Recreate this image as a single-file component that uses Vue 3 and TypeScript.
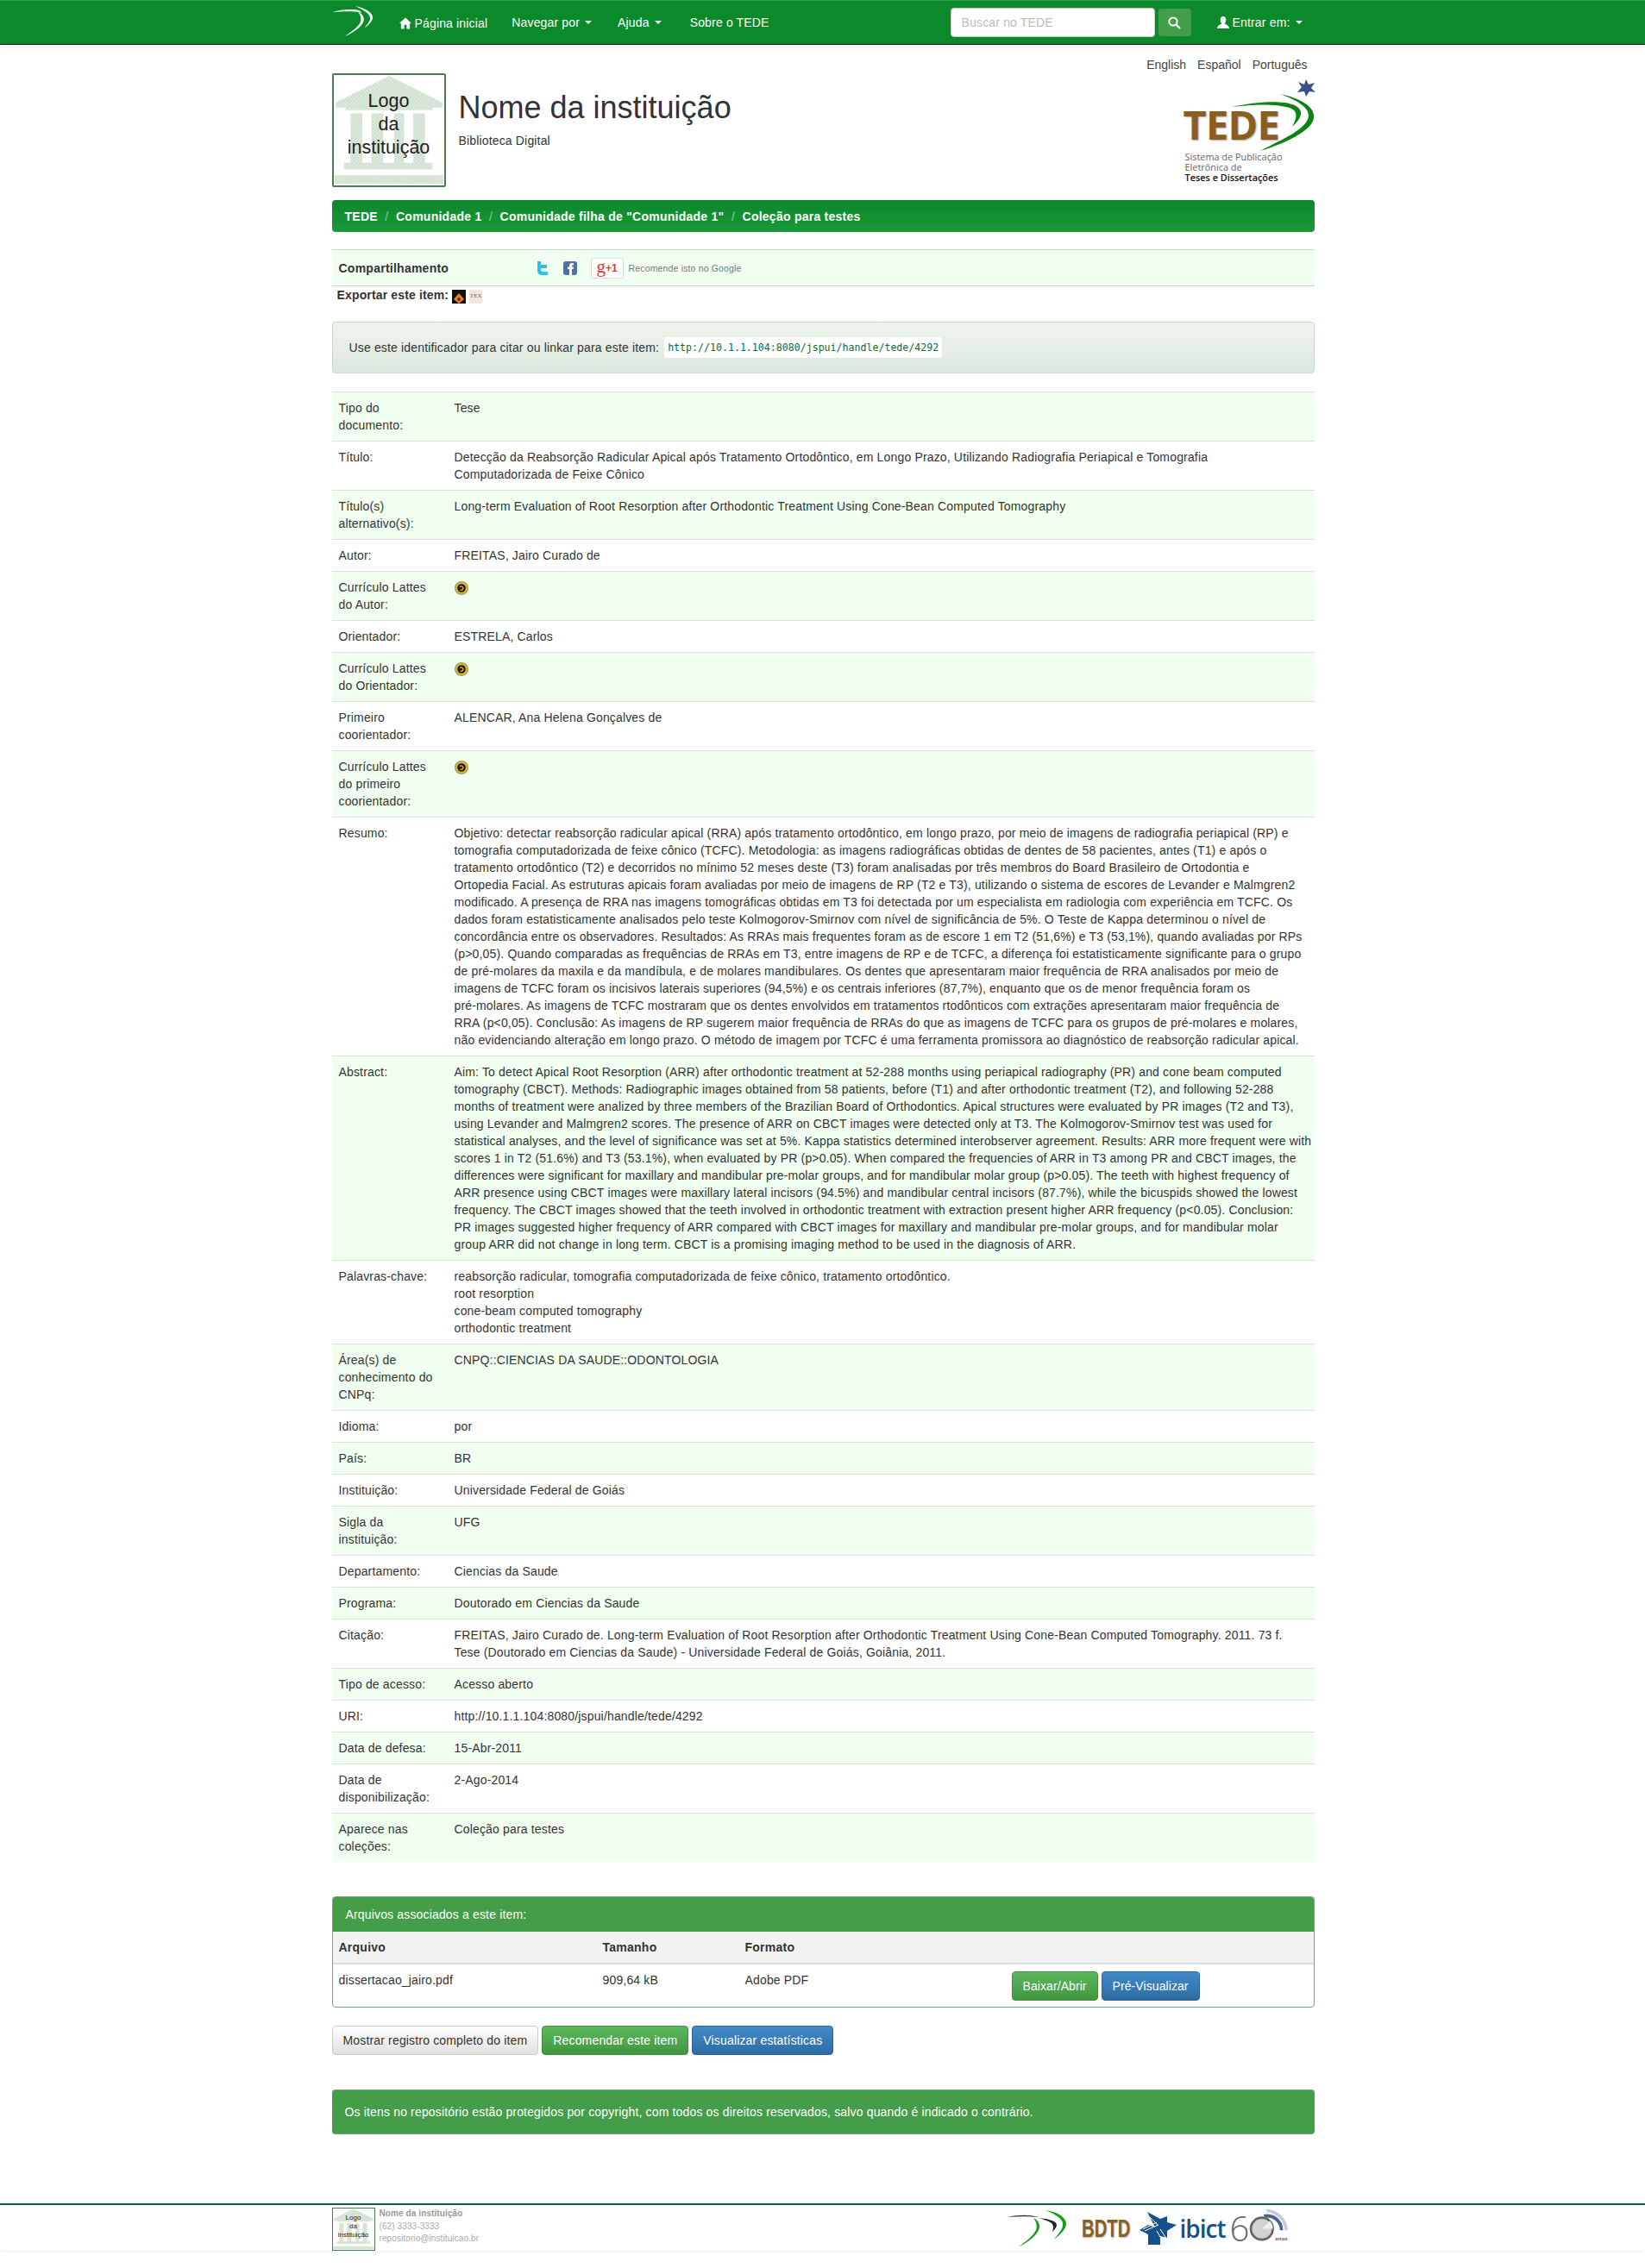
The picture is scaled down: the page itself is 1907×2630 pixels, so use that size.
<template>
  <div class="page">
    <nav class="navbar">
      <div class="container nav-inner">
        <a class="brand">
          <svg width="48" height="36" viewBox="0 0 48 36">
            <path d="M0 7C10 4 24 3 31 5C33 6 34 7 34 8C30 6 14 6 0 7Z" fill="#fff" />
            <path d="M27 0C38 2 48 8 47 14C46 19 41 23 37 26C40 22 45 17 44 13C43 8 35 4 27 0Z" fill="#fff" />
            <path d="M30 7C36 9 38 14 36 19C33 25 24 31 15 35C22 30 31 24 33 18C34 14 33 10 30 7Z" fill="#fff" />
          </svg>
        </a>
        <a class="nav-link home">
          <svg class="glyph" width="14" height="14" viewBox="0 0 15 14">
            <path d="M7.500 0L15 7H13V14H9V9H6V14H2V7H0Z" fill="#fff" />
          </svg>
          Página inicial
        </a>
        <a class="nav-link">Navegar por <span class="caret"></span></a>
        <a class="nav-link help">Ajuda <span class="caret"></span></a>
        <a class="nav-link">Sobre o TEDE</a>
        <div class="nav-search">
          <input class="search-input" type="text" placeholder="Buscar no TEDE" />
          <button class="search-btn" type="button">
            <svg width="15" height="15" viewBox="0 0 15 15">
              <circle cx="6" cy="6" r="4.600" fill="none" stroke="#fff" stroke-width="2" />
              <path d="M9.500 9.500L14 14" stroke="#fff" stroke-width="2.400" />
            </svg>
          </button>
        </div>
        <a class="nav-link login">
          <svg class="glyph" width="14" height="14" viewBox="0 0 14 14">
            <path d="M7 0C9.200 0 10.300 1.800 10.300 4C10.300 6 9.400 7.400 8.800 8.200C9.400 9.400 14 10 14 14H0C0 10 4.600 9.400 5.200 8.200C4.600 7.400 3.700 6 3.700 4C3.700 1.800 4.800 0 7 0Z" fill="#fff" />
          </svg>
          Entrar em: <span class="caret"></span>
        </a>
      </div>
    </nav>

    <main class="container">
      <div class="langs">
        <a>English</a>
        <a>Español</a>
        <a>Português</a>
      </div>

      <header class="head">
        <div class="inst-logo">
          <svg class="temple" viewBox="0 0 132 132" preserveAspectRatio="none">
            <defs>
              <pattern id="hatch" width="3" height="3" patternUnits="userSpaceOnUse" patternTransform="rotate(45)">
                <rect width="3" height="3" fill="#dce9dc" />
                <rect width="1" height="3" fill="#c9dcc9" />
              </pattern>
            </defs>
            <path d="M66 1L130 33V39H118V42H14V39H2V33Z M20 46H34V105H20Z M45 46H59V105H45Z M72 46H84V105H72Z M95 46H109V105H95Z M12 105H118V113H12Z M1 120H131V130H1Z" fill="url(#hatch)" />
          </svg>
          <span class="inst-logo-text">Logo<br />da<br />instituição</span>
        </div>
        <div class="head-title">
          <h1>Nome da instituição</h1>
          <p>Biblioteca Digital</p>
        </div>
        <div class="tede">
          <svg class="tede-art" width="152" height="122" viewBox="0 0 152 122">
            <path d="M141 0L144 6L151 4L147 10L152 15L145 14L141 20L139 14L131 15L136 9L132 3L139 6Z" fill="#3d4f8a" />
            <path d="M111 17C135 22 152 32 150 45C148 60 115 75 88 83C112 70 143 58 144 42C144 32 130 24 111 17Z" fill="#0c8412" />
            <path d="M55 32C80 26 112 24 125 29C137 33 140 42 125 55C131 44 132 37 122 33C105 28 80 29 55 32Z" fill="#0c8412" />
          </svg>
          <span class="tede-word">TEDE</span>
          <span class="tede-line l1">Sistema de Publicação</span>
          <span class="tede-line l2">Eletrônica de</span>
          <span class="tede-line l3">Teses e Dissertações</span>
        </div>
      </header>

      <ul class="crumbs">
        <li v-for="(c, i) in crumbs" :key="c">
          <span v-if="i > 0" class="sep">/</span>
          <a>{{ c }}</a>
        </li>
      </ul>

      <div class="share">
        <strong class="share-label">Compartilhamento</strong>
        <svg class="ic-tw" width="12" height="16" viewBox="0 0 12 16">
          <path d="M0 0H4V4H11V8H4V10C4 12 6 12.500 12 12V16H6C2 16 0 14 0 10Z" fill="#2fbdf5" />
        </svg>
        <svg class="ic-fb" width="16" height="16" viewBox="0 0 16 16">
          <rect width="16" height="16" rx="3" fill="#4f71a8" />
          <path d="M7 16V9H5V6.500H7V5C7 3 8.300 2 10 2H12V4.500H11C10.300 4.500 10 4.800 10 5.400V6.500H12L11.600 9H10V16Z" fill="#fff" />
        </svg>
        <span class="gplus"><span class="g">g</span><span class="plus">+1</span></span>
        <span class="gplus-text">Recomende isto no Google</span>
      </div>

      <div class="export">
        <strong>Exportar este item:</strong>
        <svg class="exp-ic" width="16" height="16" viewBox="0 0 16 16">
          <rect width="16" height="16" fill="#111" />
          <path d="M8 4L14 11L8 16L2 11Z" fill="#e8811c" />
          <rect x="6.500" y="9.500" width="3" height="3" fill="#5a1408" />
        </svg>
        <span class="tex">TEX</span>
      </div>

      <div class="cite-well">
        Use este identificador para citar ou linkar para este item:
        <code>http://10.1.1.104:8080/jspui/handle/tede/4292</code>
      </div>

      <table class="meta">
        <tbody>
          <tr v-for="row in rows" :key="row.label">
            <td class="meta-label">{{ row.label }}</td>
            <td class="meta-value">
              <svg v-if="row.lattes" class="lattes" width="16" height="16" viewBox="0 0 16 16">
                <circle cx="8" cy="8" r="8" fill="#a89c6a" />
                <circle cx="8" cy="8" r="6.500" fill="#e2c21e" />
                <circle cx="8" cy="8" r="4.800" fill="#1c1a10" />
                <path d="M6 6.500C8 5 10.500 6.500 9.800 8.800C9.300 10.300 7.500 10.600 6.500 10" fill="none" stroke="#e2c21e" stroke-width="1.300" />
              </svg>
              <template v-else>
                <div v-for="line in row.lines" :key="line" :class="{ 'fixed-line': row.fixed }">{{ line }}</div>
              </template>
            </td>
          </tr>
        </tbody>
      </table>

      <section class="files">
        <div class="files-head">Arquivos associados a este item:</div>
        <div class="files-row files-cols">
          <span class="c-name">Arquivo</span>
          <span class="c-size">Tamanho</span>
          <span class="c-type">Formato</span>
        </div>
        <div class="files-row files-item">
          <span class="c-name">dissertacao_jairo.pdf</span>
          <span class="c-size">909,64 kB</span>
          <span class="c-type">Adobe PDF</span>
          <span class="c-actions">
            <a class="btn btn-green">Baixar/Abrir</a>
            <a class="btn btn-blue">Pré-Visualizar</a>
          </span>
        </div>
      </section>

      <div class="actions">
        <a class="btn btn-white">Mostrar registro completo do item</a>
        <a class="btn btn-green">Recomendar este item</a>
        <a class="btn btn-blue">Visualizar estatísticas</a>
      </div>

      <div class="copyright">
        Os itens no repositório estão protegidos por copyright, com todos os direitos reservados, salvo quando é indicado o contrário.
      </div>
    </main>

    <footer class="footer">
      <div class="container footer-inner">
        <div class="foot-logo">
          <svg class="temple" viewBox="0 0 132 132" preserveAspectRatio="none">
            <path d="M66 1L130 33V39H118V42H14V39H2V33Z M20 46H34V105H20Z M45 46H59V105H45Z M72 46H84V105H72Z M95 46H109V105H95Z M12 105H118V113H12Z M1 120H131V130H1Z" fill="#d5e4d5" />
          </svg>
          <span class="foot-logo-text">Logo<br />da<br />instituição</span>
        </div>
        <div class="foot-info">
          <strong>Nome da instituição</strong>
          <span>(62) 3333-3333</span>
          <span>repositorio@instituicao.br</span>
        </div>
        <div class="foot-logos">
          <svg class="foot-swoosh" width="68" height="46" viewBox="0 0 68 46">
            <path d="M0 10C12 7 26 7 36 10C26 9 12 9 0 10Z" fill="#333" />
            <path d="M44 2C58 4 68 10 68 18C68 24 60 31 54 36C58 30 65 24 64 17C63 11 54 6 44 2Z" fill="#14a014" />
            <path d="M36 11C46 12 58 14 57 20C56 23 54 25 52 27C53 23 54 20 51 17C47 14 42 13 36 11Z" fill="#222" />
            <path d="M30 11C37 14 39 21 35 27C31 34 20 41 12 45C20 39 30 32 33 25C35 20 33 15 30 11Z" fill="#14a014" />
          </svg>
          <span class="bdtd"><span>BDTD</span></span>
          <svg class="ibict-star" width="43" height="38" viewBox="0 0 43 38">
            <path d="M9 0L24 8L32 5V12L43 15L32 22V30L24 28V38L10 38V26L0 21L10 15L18 18Z" fill="#14508c" />
            <path d="M4 20L20 12M6 22L22 15M20 22L28 36M24 20L32 32M12 6L22 16" stroke="#fff" stroke-width="1" />
          </svg>
          <span class="ibict">ibict</span>
          <span class="sixty">
            <span class="six">6</span>
            <svg class="zero" width="46" height="40" viewBox="0 0 50 44">
              <path d="M18 10A20 20 0 0 1 43 30L39 30A16 16 0 0 0 20 14Z" fill="#4d5f94" />
              <path d="M22 3A28 28 0 0 1 49 30L45 30A24 24 0 0 0 22 7Z" fill="#c3cadc" />
              <circle cx="16" cy="28" r="14" fill="#d2d2d2" stroke="#666" stroke-width="3" />
              <path d="M16 28L26 18A14 14 0 0 1 30 28Z" fill="#eee" />
            </svg>
            <span class="anos">anos</span>
          </span>
        </div>
      </div>
    </footer>
  </div>
</template>

<script setup lang="ts">
interface Row {
  label: string
  lines?: string[]
  lattes?: boolean
  fixed?: boolean
}

const crumbs = ['TEDE', 'Comunidade 1', 'Comunidade filha de "Comunidade 1"', 'Coleção para testes']

const rows: Row[] = [
  { label: 'Tipo do documento:', lines: ['Tese'] },
  { label: 'Título:', lines: ['Detecção da Reabsorção Radicular Apical após Tratamento Ortodôntico, em Longo Prazo, Utilizando Radiografia Periapical e Tomografia Computadorizada de Feixe Cônico'] },
  { label: 'Título(s) alternativo(s):', lines: ['Long-term Evaluation of Root Resorption after Orthodontic Treatment Using Cone-Bean Computed Tomography'] },
  { label: 'Autor:', lines: ['FREITAS, Jairo Curado de'] },
  { label: 'Currículo Lattes do Autor:', lattes: true },
  { label: 'Orientador:', lines: ['ESTRELA, Carlos'] },
  { label: 'Currículo Lattes do Orientador:', lattes: true },
  { label: 'Primeiro coorientador:', lines: ['ALENCAR, Ana Helena Gonçalves de'] },
  { label: 'Currículo Lattes do primeiro coorientador:', lattes: true },
  {
    label: 'Resumo:',
    fixed: true,
    lines: [
      'Objetivo: detectar reabsorção radicular apical (RRA) após tratamento ortodôntico, em longo prazo, por meio de imagens de radiografia periapical (RP) e',
      'tomografia computadorizada de feixe cônico (TCFC). Metodologia: as imagens radiográficas obtidas de dentes de 58 pacientes, antes (T1) e após o',
      'tratamento ortodôntico (T2) e decorridos no mínimo 52 meses deste (T3) foram analisadas por três membros do Board Brasileiro de Ortodontia e',
      'Ortopedia Facial. As estruturas apicais foram avaliadas por meio de imagens de RP (T2 e T3), utilizando o sistema de escores de Levander e Malmgren2',
      'modificado. A presença de RRA nas imagens tomográficas obtidas em T3 foi detectada por um especialista em radiologia com experiência em TCFC. Os',
      'dados foram estatisticamente analisados pelo teste Kolmogorov-Smirnov com nível de significância de 5%. O Teste de Kappa determinou o nível de',
      'concordância entre os observadores. Resultados: As RRAs mais frequentes foram as de escore 1 em T2 (51,6%) e T3 (53,1%), quando avaliadas por RPs',
      '(p>0,05). Quando comparadas as frequências de RRAs em T3, entre imagens de RP e de TCFC, a diferença foi estatisticamente significante para o grupo',
      'de pré-molares da maxila e da mandíbula, e de molares mandibulares. Os dentes que apresentaram maior frequência de RRA analisados por meio de',
      'imagens de TCFC foram os incisivos laterais superiores (94,5%) e os centrais inferiores (87,7%), enquanto que os de menor frequência foram os',
      'pré-molares. As imagens de TCFC mostraram que os dentes envolvidos em tratamentos rtodônticos com extrações apresentaram maior frequência de',
      'RRA (p<0,05). Conclusão: As imagens de RP sugerem maior frequência de RRAs do que as imagens de TCFC para os grupos de pré-molares e molares,',
      'não evidenciando alteração em longo prazo. O método de imagem por TCFC é uma ferramenta promissora ao diagnóstico de reabsorção radicular apical.'
    ]
  },
  {
    label: 'Abstract:',
    fixed: true,
    lines: [
      'Aim: To detect Apical Root Resorption (ARR) after orthodontic treatment at 52-288 months using periapical radiography (PR) and cone beam computed',
      'tomography (CBCT). Methods: Radiographic images obtained from 58 patients, before (T1) and after orthodontic treatment (T2), and following 52-288',
      'months of treatment were analized by three members of the Brazilian Board of Orthodontics. Apical structures were evaluated by PR images (T2 and T3),',
      'using Levander and Malmgren2 scores. The presence of ARR on CBCT images were detected only at T3. The Kolmogorov-Smirnov test was used for',
      'statistical analyses, and the level of significance was set at 5%. Kappa statistics determined interobserver agreement. Results: ARR more frequent were with',
      'scores 1 in T2 (51.6%) and T3 (53.1%), when evaluated by PR (p>0.05). When compared the frequencies of ARR in T3 among PR and CBCT images, the',
      'differences were significant for maxillary and mandibular pre-molar groups, and for mandibular molar group (p>0.05). The teeth with highest frequency of',
      'ARR presence using CBCT images were maxillary lateral incisors (94.5%) and mandibular central incisors (87.7%), while the bicuspids showed the lowest',
      'frequency. The CBCT images showed that the teeth involved in orthodontic treatment with extraction present higher ARR frequency (p<0.05). Conclusion:',
      'PR images suggested higher frequency of ARR compared with CBCT images for maxillary and mandibular pre-molar groups, and for mandibular molar',
      'group ARR did not change in long term. CBCT is a promising imaging method to be used in the diagnosis of ARR.'
    ]
  },
  { label: 'Palavras-chave:', lines: ['reabsorção radicular, tomografia computadorizada de feixe cônico, tratamento ortodôntico.', 'root resorption', 'cone-beam computed tomography', 'orthodontic treatment'] },
  { label: 'Área(s) de conhecimento do CNPq:', lines: ['CNPQ::CIENCIAS DA SAUDE::ODONTOLOGIA'] },
  { label: 'Idioma:', lines: ['por'] },
  { label: 'País:', lines: ['BR'] },
  { label: 'Instituição:', lines: ['Universidade Federal de Goiás'] },
  { label: 'Sigla da instituição:', lines: ['UFG'] },
  { label: 'Departamento:', lines: ['Ciencias da Saude'] },
  { label: 'Programa:', lines: ['Doutorado em Ciencias da Saude'] },
  { label: 'Citação:', lines: ['FREITAS, Jairo Curado de. Long-term Evaluation of Root Resorption after Orthodontic Treatment Using Cone-Bean Computed Tomography. 2011. 73 f. Tese (Doutorado em Ciencias da Saude) - Universidade Federal de Goiás, Goiânia, 2011.'] },
  { label: 'Tipo de acesso:', lines: ['Acesso aberto'] },
  { label: 'URI:', lines: ['http://10.1.1.104:8080/jspui/handle/tede/4292'] },
  { label: 'Data de defesa:', lines: ['15-Abr-2011'] },
  { label: 'Data de disponibilização:', lines: ['2-Ago-2014'] },
  { label: 'Aparece nas coleções:', lines: ['Coleção para testes'] }
]
</script>

<style>
body {
  margin: 0;
  background: #fff;
}
</style>

<style scoped>
.page {
  font-family: "Liberation Sans", Arial, sans-serif;
  font-size: 14px;
  line-height: 20px;
  letter-spacing: 0.16px;
  color: #333;
  height: 2630px;
  overflow: hidden;
}

strong {
  letter-spacing: 0.25px;
}

.container {
  width: 1139px;
  margin: 0 auto;
  position: relative;
  left: 0.5px;
}

/* navbar */
.navbar {
  height: 50px;
  background: #0a8a2b;
  border-top: 1px solid #2a9a45;
  border-bottom: 1px solid #111;
  box-shadow: 0 1px 8px rgba(0, 0, 0, 0.08);
}

.nav-inner {
  display: flex;
  align-items: center;
  height: 50px;
  color: #fff;
}

.brand {
  width: 78px;
  display: flex;
  padding-bottom: 2px;
}

.nav-link {
  color: #fff;
  margin-right: 30px;
  display: inline-flex;
  align-items: center;
  gap: 4px;
  white-space: nowrap;
}

.home {
  margin-top: 2px;
  margin-right: 28px;
}

.help {
  margin-right: 33px;
}

.caret {
  display: inline-block;
  border-top: 4px solid #fff;
  border-left: 4px solid transparent;
  border-right: 4px solid transparent;
  margin-left: 2px;
}

.nav-search {
  margin-left: auto;
  display: flex;
  align-items: center;
  gap: 4px;
  margin-right: 30px;
}

.search-input {
  width: 237px;
  height: 34px;
  box-sizing: border-box;
  border: 1px solid #ccc;
  border-radius: 4px;
  padding: 6px 12px;
  font: 14px "Liberation Sans", Arial, sans-serif;
  letter-spacing: 0.16px;
}

.search-input::placeholder {
  color: #bbb;
}

.search-btn {
  width: 38px;
  height: 32px;
  border: 0;
  border-radius: 4px;
  background: #449d48;
  padding: 0;
  display: flex;
  align-items: center;
  justify-content: center;
}

.login {
  margin-right: 14px;
}

/* header */
.langs {
  display: flex;
  justify-content: flex-end;
  gap: 13px;
  padding: 13px 8px 0 0;
  color: #444;
  letter-spacing: 0;
}

.head {
  display: flex;
  height: 147px;
  position: relative;
}

.inst-logo {
  width: 132px;
  height: 132px;
  box-sizing: border-box;
  border: 2px solid #4e7a50;
  border-radius: 2px;
  position: relative;
  display: flex;
  align-items: center;
  justify-content: center;
  text-align: center;
  flex: none;
}

.temple {
  position: absolute;
  inset: 0;
  width: 100%;
  height: 100%;
}

.inst-logo-text {
  position: relative;
  top: -7px;
  font-size: 21.500px;
  line-height: 27px;
  letter-spacing: 0;
  color: #222;
}

.head-title {
  margin-left: 15px;
}

h1 {
  margin: 20px 0 0;
  font-size: 36px;
  line-height: 40px;
  font-weight: 400;
  letter-spacing: 0;
}

.head-title p {
  margin: 8px 0 0;
}

.tede {
  margin-left: auto;
  width: 151px;
  height: 122px;
  position: relative;
  margin-top: 7px;
  font-family: "Open Sans", sans-serif;
  letter-spacing: 0;
}

.tede-art {
  position: absolute;
  left: 0;
  top: 0;
}

.tede-word {
  position: absolute;
  left: -1px;
  top: 22px;
  font-size: 47px;
  line-height: 60px;
  font-weight: 700;
  letter-spacing: -0.800px;
  color: #8a5e1e;
  text-shadow: 1px 1px 2px rgba(0, 0, 0, 0.35);
}

.tede-line {
  position: absolute;
  left: 1px;
  font-size: 10.900px;
  line-height: 12px;
  color: #666;
  white-space: nowrap;
}

.tede-line.l1 {
  top: 84px;
}

.tede-line.l2 {
  top: 96px;
}

.tede-line.l3 {
  top: 108px;
  color: #111;
  font-weight: 600;
}

/* breadcrumb */
.crumbs {
  list-style: none;
  margin: 0;
  padding: 0 15px;
  height: 37px;
  background: linear-gradient(#0a872b, #1a9a3a);
  border-radius: 4px;
  display: flex;
  align-items: center;
  color: #fff;
  font-weight: 700;
  letter-spacing: 0.25px;
}

.crumbs li {
  display: flex;
  white-space: nowrap;
}

.sep {
  color: #8cc79c;
  font-weight: 400;
  padding: 0 8.500px;
}

/* share */
.share {
  margin-top: 20px;
  height: 43px;
  box-sizing: border-box;
  background: #f0fff0;
  border-top: 1px solid #c5dcc5;
  border-bottom: 1px solid #c5dcc5;
  display: flex;
  align-items: center;
  padding-left: 8px;
}

.share-label {
  width: 230px;
}

.ic-fb {
  margin-left: 18px;
}

.gplus {
  margin-left: 16px;
  width: 38px;
  height: 24px;
  box-sizing: border-box;
  background: #fff;
  border: 1px solid #ddd;
  border-radius: 2px;
  display: flex;
  align-items: center;
  justify-content: center;
  color: #d73d32;
  font-family: "Liberation Serif", serif;
  line-height: 20px;
  letter-spacing: 0;
}

.gplus .g {
  font-size: 21px;
  margin-top: -4px;
}

.gplus .plus {
  font-family: "Liberation Sans", sans-serif;
  font-weight: 700;
  font-size: 12px;
}

.gplus-text {
  margin-left: 6px;
  font-size: 10.500px;
  color: #777;
}

.export {
  display: flex;
  align-items: flex-start;
  gap: 4px;
  height: 20px;
  padding-left: 6px;
  margin-bottom: 21px;
}

.export strong {
  letter-spacing: 0.15px;
}

.exp-ic {
  margin-top: 4px;
}

.tex {
  width: 15px;
  height: 16px;
  margin-top: 4px;
  background: #eee8e0;
  color: #666;
  font: 7px/14px "Liberation Serif", serif;
  letter-spacing: 0;
  text-align: center;
}

.cite-well {
  height: 60px;
  box-sizing: border-box;
  padding: 0 19px;
  display: flex;
  align-items: center;
  gap: 4px;
  border: 1px solid #c6dac6;
  border-radius: 4px;
  background: linear-gradient(#eef5ee, #dbe7db);
  white-space: nowrap;
}

code {
  font-family: "DejaVu Sans Mono", monospace;
  font-size: 11.600px;
  letter-spacing: 0;
  color: #0d6b3b;
  background: #fff;
  border-radius: 3px;
  padding: 2px 4px;
  margin-left: 2px;
}

/* metadata table */
.meta {
  width: 100%;
  margin-top: 21px;
  border-collapse: collapse;
  table-layout: fixed;
}

.meta td {
  border-top: 1px solid #ddd;
  padding: 8px;
  vertical-align: top;
}

.meta tr:nth-child(odd) td {
  background: #f0fff0;
}

.meta-label {
  width: 118px;
}

.fixed-line {
  white-space: nowrap;
}

.lattes {
  display: block;
  margin-top: 3px;
}

/* files panel */
.files {
  margin-top: 40px;
  height: 129px;
  box-sizing: border-box;
  border: 1px solid #6eaa70;
  border-radius: 4px;
  overflow: hidden;
}

.files-head {
  height: 40px;
  box-sizing: border-box;
  background: #449d48;
  color: #fff;
  padding: 10px 15px;
}

.files-row {
  display: flex;
  padding: 8px 7px;
}

.files-cols {
  height: 38px;
  box-sizing: border-box;
  background: #f2f2f2;
  font-weight: 700;
  letter-spacing: 0.25px;
  border-bottom: 2px solid #ddd;
}

.c-name {
  width: 306px;
}

.c-size {
  width: 165px;
}

.c-type {
  width: 309px;
}

.c-actions {
  display: flex;
  gap: 4px;
  letter-spacing: 0.08px;
}

.btn {
  display: inline-block;
  height: 34px;
  box-sizing: border-box;
  border-radius: 4px;
  padding: 6px 12px;
  border: 1px solid transparent;
  white-space: nowrap;
}

.btn-green {
  color: #fff;
  background: linear-gradient(#5cb85c, #419641);
  border-color: #3e8f3e;
}

.btn-blue {
  color: #fff;
  background: linear-gradient(#428bca, #2d6ca2);
  border-color: #2b669a;
}

.btn-white {
  color: #333;
  background: linear-gradient(#fff, #e0e0e0);
  border-color: #ccc;
}

.actions {
  margin-top: 21px;
  display: flex;
  gap: 4px;
}

.copyright {
  margin-top: 40px;
  height: 52px;
  box-sizing: border-box;
  padding: 15px;
  background: #449d48;
  border-top: 1px solid #6eaa70;
  border-bottom: 1px solid #6eaa70;
  border-radius: 4px;
  color: #fff;
}

/* footer */
.footer {
  margin-top: 80px;
  border-top: 2px solid #006633;
  height: 54px;
  box-sizing: border-box;
  box-shadow: 0 2px 4px rgba(0, 0, 0, 0.05);
}

.footer-inner {
  display: flex;
  height: 52px;
  padding-top: 3px;
  box-sizing: border-box;
}

.foot-logo {
  width: 50px;
  height: 50px;
  box-sizing: border-box;
  border: 1px solid #4e7a50;
  position: relative;
  display: flex;
  align-items: center;
  justify-content: center;
  text-align: center;
  flex: none;
}

.foot-logo-text {
  position: relative;
  top: -3px;
  font-size: 8px;
  line-height: 10px;
  letter-spacing: 0;
  color: #222;
}

.foot-info {
  margin-left: 5px;
  display: flex;
  flex-direction: column;
  font-size: 10px;
  line-height: 14.500px;
  letter-spacing: 0.1px;
  color: #aaa;
  white-space: nowrap;
}

.foot-info strong {
  color: #999;
  letter-spacing: 0.1px;
}

.foot-logos {
  margin-left: auto;
  display: flex;
  align-items: center;
  height: 48px;
  letter-spacing: 0;
  position: relative;
  width: 356px;
}

.foot-swoosh {
  flex: none;
}

.bdtd {
  margin-left: 18px;
  width: 67px;
  flex: none;
  font-weight: 700;
  font-size: 29px;
  line-height: 30px;
  color: #8a601e;
  text-shadow: 1px 1px 2px rgba(0, 0, 0, 0.3);
}

.bdtd span {
  display: inline-block;
  transform: scaleX(0.7);
  transform-origin: left center;
}

.ibict-star {
  flex: none;
}

.ibict {
  margin-left: 4px;
  font-family: "Open Sans", sans-serif;
  font-weight: 600;
  font-size: 28px;
  letter-spacing: -1px;
  color: #14508c;
}

.sixty {
  margin-left: 5px;
  display: flex;
  align-items: center;
  font-family: "Open Sans", sans-serif;
  font-size: 40px;
  line-height: 38px;
  color: #666;
  position: relative;
}

.six {
  font-weight: 300;
}

.zero {
  margin-top: -10px;
  flex: none;
}

.anos {
  position: absolute;
  right: 2px;
  bottom: 3px;
  font-size: 6px;
  line-height: 8px;
  font-weight: 700;
}
</style>
